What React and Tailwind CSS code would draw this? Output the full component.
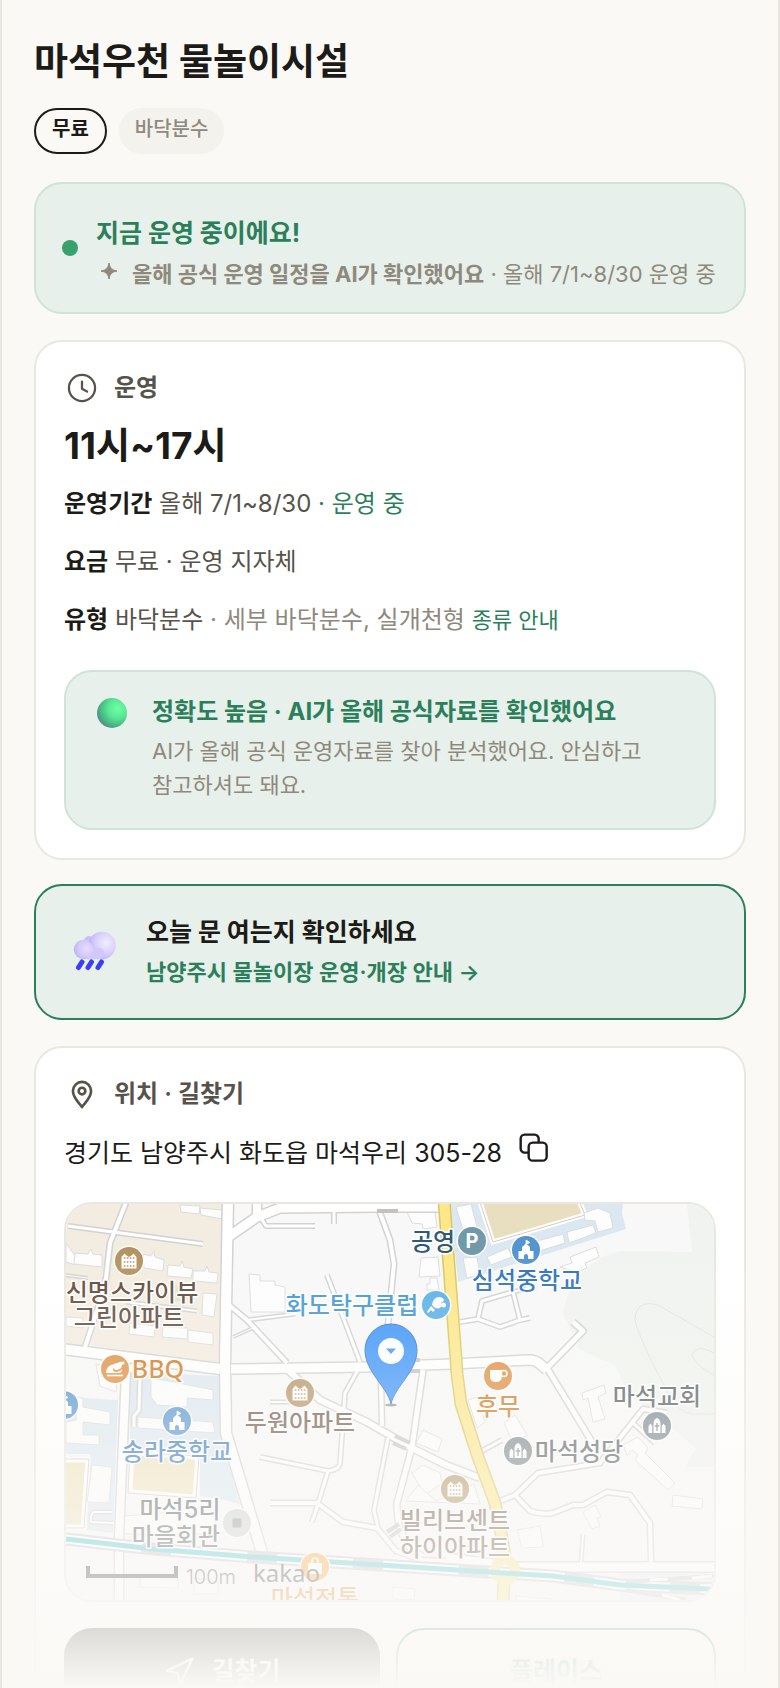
import React from 'react';
import { Navigation } from 'lucide-react';

const roads = [
    { d: 'M162 -5L159 160L160 229L197 352', w: 13 },
    { d: 'M162 33L191 13L214 4L311 3L374 3', w: 12 },
    { d: 'M191 -6V10', w: 11 },
    { d: 'M195 14L200 22H249', w: 6 },
    { d: 'M268 6V20', w: 6 },
    { d: 'M313 6L324 36L328 60L322 120L315 176L316 222', w: 7 },
    { d: 'M261 71L294 158', w: 6 },
    { d: 'M163 101L181 116L221 159', w: 7 },
    { d: 'M181 116L229 110', w: 5 },
    { d: 'M167 133L187 124', w: 4 },
    { d: 'M165 165L299 163L386 160L463 156Q470 156 474 160L481 166', w: 12 },
    { d: 'M-4 145L154 165', w: 13 },
    { d: 'M394 118L412 115L416 97L447 88L454 116L434 123L412 115', w: 6 },
    { d: 'M454 116L464 114', w: 6 },
    { d: 'M447 88L470 82', w: 5 },
    { d: 'M507 118L517 127L481 164L526 238', w: 8 },
    { d: 'M357 166L346 243L331 299Q330 325 344 344L356 352', w: 8 },
    { d: 'M222 166L254 196L301 218L344 243L380 261L414 274', w: 9 },
    { d: 'M292 166L279 189L274 260Q272 266 262 267L194 253', w: 6 },
    { d: 'M262 267L251 303L246 318', w: 6 },
    { d: 'M204 299L251 299L277 318L311 324L330 347L356 356L401 358', w: 7 },
    { d: 'M322 234L308 306L312 324', w: 6 },
    { d: 'M204 198H226', w: 5 },
    { d: 'M434 297L449 291L472 269L534 259L577 205L601 209', w: 7 },
    { d: 'M449 291L464 307Q476 311 487 309L507 301L517 301L541 288L564 291L584 319L585 360', w: 7 },
    { d: 'M517 331L515 360', w: 5 },
    { d: 'M380 354L452 363L660 363', w: 12 },
    { d: 'M414 248L436 236', w: 6 },
    { d: 'M567 219L589 239', w: 6 },
    { d: 'M60 168L53 333V396', w: 11 },
    { d: 'M74 174L73 206L68 212V223', w: 6 },
    { d: 'M46 308H28Q24 310 25 318L47 319', w: 5 },
    { d: 'M61 -4L44 39L39 83L19 143', w: 7 },
    { d: 'M2 22L137 40', w: 6 },
    { d: 'M-2 71L22 74', w: 4 },
    { d: 'M60 98L131 107', w: 5 },
];

const houses = [
    '114,1 134,2 133,10 115,8',
    '134,4 156,6 156,15 135,11',
    '0,39 10,53 9,61 0,58',
    '9,49 22,50 25,45 27,50 36,51 36,63 8,60',
    '77,50 85,52 88,47 89,53 98,56 97,67 78,64',
    '102,61 114,62 116,57 118,63 127,65 125,74 101,72',
    '127,67 139,67 141,62 143,68 152,69 151,79 127,77',
    '137,89 151,90 148,113 136,111',
    '0,113 17,114 17,124 0,122',
    '64,119 89,122 88,133 63,130',
    '97,123 122,124 121,135 96,133',
    '122,126 147,129 147,141 122,138',
    '183,70 194,71 194,77 209,77 209,81 219,83 219,108 185,108',
    '341,8 369,8 371,23 357,25 356,20 346,19',
    '355,54 372,53 374,72 353,73',
    '364,74 371,74 373,86 361,86 361,80 364,80',
    '390,3 405,0 411,23 397,26',
    '421,53 442,44 446,53 425,61',
    '464,39 497,30 499,39 467,49',
    '501,28 527,21 530,29 503,39',
    '518,9 532,4 544,9 547,24 532,28 529,17 519,16',
    '494,63 506,59 504,53 530,43 533,53 519,59 521,64 511,68',
    '397,54 411,53 414,71 401,74',
    '516,189 538,181 540,189 532,193 539,215 527,218 522,194 517,196',
    '357,226 376,235 372,248 350,239',
    '438,219 449,211 461,231 447,239',
    '402,196 411,193 419,218 411,224',
    '557,241 572,233 582,244 579,249 609,279 602,286 569,256 572,251 566,246 561,251',
    '607,291 637,295 636,305 606,302',
    '517,308 529,301 535,313 531,314 534,322 526,325',
    '451,326 474,322 477,343 456,344',
    '346,269 357,261 374,269 376,279 359,291',
    '340,297 352,281 370,297 408,280 414,300',
    '11,193 17,194 17,203 44,208 44,221 17,218 17,231 33,231 33,241 0,239 0,218 10,216',
    '26,261 46,263 43,299 21,298',
    '85,174 108,178 147,186 147,196 121,194 121,203 91,201 85,193',
    '72,213 147,218 149,229 72,224',
    '30,160 52,166 50,188 34,182',
    '58,312 110,308 150,312 150,330 58,330',
    '74,373 112,374 112,384 74,383',
    '327,383 349,385 348,396 327,395',
    '450,392 486,395 486,402 450,402',
    '128,374 152,378 152,390 128,390',
];

const labels = [
    { x: 66, y: 97, text: '신명스카이뷰', color: '#5f4a3c' },
    { x: 63, y: 122, text: '그린아파트', color: '#5f4a3c' },
    { x: 367, y: 46, text: '공영', color: '#2d5b75' },
    { x: 461, y: 85, text: '심석중학교', color: '#2e73bb' },
    { x: 286, y: 110, text: '화도탁구클럽', color: '#3f98d3' },
    { x: 432, y: 211, text: '후무', color: '#cf7518' },
    { x: 591, y: 201, text: '마석교회', color: '#50595d' },
    { x: 513, y: 256, text: '마석성당', color: '#50595d' },
    { x: 234, y: 227, text: '두원아파트', color: '#6b5546' },
    { x: 111, y: 256, text: '송라중학교', color: '#2e73bb' },
    { x: 114, y: 314, text: '마석5리', color: '#50595d' },
    { x: 110, y: 341, text: '마을회관', color: '#50595d' },
    { x: 389, y: 325, text: '빌리브센트', color: '#6b5546' },
    { x: 389, y: 352, text: '하이아파트', color: '#6b5546' },
    { x: 249, y: 403, text: '마석전통', color: '#ea7c1c' },
];

function Spot({ x, y, color, children }) {
    return (
        <g transform={`translate(${x} ${y})`}>
            <circle r="15.5" fill="#ffffff" fillOpacity="0.9" />
            <circle r="14" fill={color} />
            {children}
        </g>
    );
}

function Apartment({ x, y }) {
    return (
        <Spot x={x} y={y} color="#b49362">
            <path d="M-7.5 7.5V-4L-4.5 -7.5L-2.5 -5.5L0 -4L2.5 -5.5L4.5 -7.5L7.5 -4V7.5Z" fill="#fff" />
            {[-3, 1, 5].map((wy) => (
                <path key={wy} d={`M-5.2 ${wy}h10.6`} stroke="#b49362" strokeWidth="1.6" strokeDasharray="1.6 1.4" />
            ))}
        </Spot>
    );
}

function School({ x, y }) {
    return (
        <Spot x={x} y={y} color="#5494cf">
            <path d="M-7.5 9V1H-4V-3L0 -6.5L4 -3V1H7.5V9H2V6a2 2 0 0 0-4 0V9Z" fill="#fff" />
            <path d="M0 -5V-10L4 -7.5L0.8 -6" fill="#fff" stroke="#fff" strokeWidth="0.8" />
        </Spot>
    );
}

function Church({ x, y }) {
    return (
        <Spot x={x} y={y} color="#7a868c">
            <path d="M-3.5 7V-3Q-3 -7 0 -8Q3 -7 3.5 -3V7ZM-8.5 7V0L-6.5 -2.5L-4.7 0V7ZM8.5 7V0L6.5 -2.5L4.7 0V7Z" fill="#fff" />
            <path d="M0 -3V5M-2.2 0H2.2" stroke="#7a868c" strokeWidth="1.3" />
        </Spot>
    );
}

function MapView() {
    return (
        <svg viewBox="0 0 648 396" preserveAspectRatio="xMidYMid slice" className="block h-[396px] w-full" role="img" aria-label="마석우천 물놀이시설 지도">
            <rect width="648" height="396" fill="#f8f8f8" />

            {/* Ground areas */}
            <path d="M0 0H158L154 160L22 141H0Z" fill="#f3ece0" />
            <path d="M384 0H557L556 9L560 25L392 78Z" fill="#dce8f1" />
            <path d="M621 0H648V263L619 263L630 244L562 189L549 161L514 146L497 109Q502 80 522 63Q538 50 554 47L626 48Z" fill="#f0f3ef" />
            <path d="M64 168L154 172L156 236L174 300L158 296L134 292L134 252L64 246Z" fill="#dce8f1" />
            <path d="M0 193L52 196L47 329L21 326L24 250L0 250Z" fill="#dce8f1" />
            <path d="M106 81L121 83V96L106 98Z" fill="#d8e9d2" />
            <path d="M554 369H648V396H554Z" fill="#e6eef4" />

            {/* School fields */}
            <g stroke="#ffffff" strokeWidth="5">
                <path d="M412 -8L427 38L519 11L511 -8Z" fill="#e8dec0" />
                <path d="M66 249L132 253L129 293L64 288Z" fill="#efe3bd" />
                <path d="M-4 256L22 256L17 323H-4Z" fill="#efe3bd" />
            </g>
            <g fill="none" stroke="#dcc9bb">
                <path d="M412 -8L427 38L519 11L511 -8ZM64 248L133 252L130 294L62 289ZM-4 255L23 255L18 324H-4Z" />
            </g>

            <g fill="#fdfdfd" stroke="#dcdcdc">
                {houses.map((points) => (
                    <polygon key={points} points={points} />
                ))}
            </g>

            {/* Hill contours */}
            <path d="M648 133L592 101Q570 95 569 116Q572 132 599 183Q611 210 627 210H648M648 149Q630 139 626 151Q630 162 648 171" fill="none" stroke="#dfe3de" />

            {/* Roads: casing first, surface on top */}
            <g fill="none" stroke="#d2d2d2" strokeLinejoin="round">
                {roads.map((road) => (
                    <path key={road.d} d={road.d} strokeWidth={road.w} />
                ))}
            </g>
            <g fill="none" stroke="#ffffff" strokeLinejoin="round">
                {roads.map((road) => (
                    <path key={road.d} d={road.d} strokeWidth={road.w - 3} />
                ))}
            </g>
            <path d="M311 7L332 7M329 232L344 239M327 239L340 245M342 156H354M340 167H354M321 328L333 320M324 333L335 325" stroke="#c2c2c2" strokeWidth="4" />

            {/* Railway */}
            <path d="M0 335L87 345L187 353L314 361L437 369L487 372L554 381L648 385" fill="none" stroke="#c9c9c9" strokeWidth="13" />
            <path d="M0 335L87 345L187 353L314 361L437 369L487 372L554 381L648 385" fill="none" stroke="#ffffff" strokeWidth="9" strokeDasharray="76 30" />
            <path d="M560 378L648 372M560 386L620 396" fill="none" stroke="#c9c9c9" strokeWidth="4" />
            <path d="M584 376L602 375M626 374L646 372M596 391L614 396" fill="none" stroke="#ffffff" strokeWidth="3" />

            {/* Main road */}
            <g fill="none" strokeLinejoin="round">
                <path d="M378 -4L390 154L391 170L395 200L412 253L429 299L435 329L439 352M438 378L437 400" stroke="#d8c661" strokeWidth="13" />
                <circle cx="439" cy="366" r="10" stroke="#f7e690" strokeWidth="10" />
                <path d="M378 -4L390 154L391 170L395 200L412 253L429 299L435 329L439 352M438 378L437 400" stroke="#fde788" strokeWidth="10" />
            </g>
            <path d="M0 335L87 345L187 353L314 361L437 369L487 372L554 381L644 385" fill="none" stroke="#52c8cd" strokeWidth="5" />

            {/* Places */}
            <Apartment x={63} y={57} />
            <Apartment x={234} y={189} />
            <Apartment x={389} y={285} />
            <School x={460} y={46} />
            <School x={111} y={217} />
            <School x={-2} y={201} />
            <Church x={591} y={222} />
            <Church x={452} y={247} />
            <Spot x={49} y={165} color="#de8d3e">
                <path d="M-9 3Q-8 -4 -1 -5Q1 -6 3 -6Q5 -8 7 -7Q9 -9 9.500 -6Q9.500 -4 7 -4.500Q7 0 2 1Q-2 1 -1 -2Q-4 3 2 3Q6 2 7 0Q7 4 4 4H-9Z" fill="#fff" />
                <path d="M-8 6.5H8" stroke="#fff" strokeWidth="1.600" />
            </Spot>
            <Spot x={432} y={172} color="#de8d3e">
                <path d="M-8 -6H4V0Q4 6 -2 6Q-8 6 -8 0Z" fill="#fff" />
                <circle cx="6" cy="-2.5" r="3" fill="none" stroke="#fff" strokeWidth="1.6" />
            </Spot>
            <Spot x={370} y={101} color="#5ab1e6">
                <path d="M-4 0Q-3 -7 2 -8Q8 -8 8 -4Q4 -3 5 2Q1 6 -4 0ZM-5 1L-1 5L-3 7L-5 5L-8 8L-9 7Z" fill="#fff" />
                <circle cx="7.500" cy="0" r="2.500" fill="#fff" />
            </Spot>
            <Spot x={406} y={37} color="#7299aa">
                <text y="7" textAnchor="middle" fill="#ffffff" className="text-[20px] font-bold">P</text>
            </Spot>
            <Spot x={171} y={319} color="#cfd1d3">
                <rect x="-4.5" y="-4.5" width="9" height="9" fill="#8e9699" />
            </Spot>
            <Spot x={249} y={363} color="#fba22c">
                <path d="M-7 -4H7V7H-7Z" fill="#fff" />
                <path d="M-3 -4V-6a3 3 0 0 1 6 0V-4" fill="none" stroke="#fff" strokeWidth="1.6" />
            </Spot>

            <g textAnchor="middle" stroke="#ffffff" strokeWidth="3" strokeLinejoin="round" paintOrder="stroke" className="text-[24px] font-medium">
                {labels.map((label) => (
                    <text key={label.text} x={label.x} y={label.y} fill={label.color}>{label.text}</text>
                ))}
                <text x="92" y="174" fill="#cf7518" className="font-['Noto_Sans'] text-[25px]">BBQ</text>
            </g>

            {/* Current facility marker */}
            <ellipse cx="325" cy="201" rx="6" ry="1.5" fill="#000000" fillOpacity="0.4" />
            <path d="M325 200C321 182 299 168 299 146A26 26 0 0 1 351 146C351 168 329 182 325 200Z" fill="#3c94f9" stroke="#2f73cf" />
            <circle cx="325" cy="147" r="13" fill="#ffffff" />
            <path d="M320 144.500H330L325 150Z" fill="#3c94f9" />

            {/* Scale and logo */}
            <path d="M22 362V372H110V362" fill="none" stroke="#333333" strokeWidth="4" />
            <text x="120" y="380" fill="#4a4a4a" className="text-[20px] font-light">100m</text>
            <text x="187" y="378" fill="#3a3a3a" className="font-['Noto_Sans'] text-[24px]">kakao</text>
        </svg>
    );
}

function RainCloud() {
    return (
        <svg viewBox="0 0 54 48" className="h-12 w-[54px] shrink-0" aria-hidden="true">
            <defs>
                <radialGradient id="cloudBig" cx="0.65" cy="0.4" r="0.65">
                    <stop offset="0" stopColor="#f3ecfd" />
                    <stop offset="0.6" stopColor="#d9d0fb" />
                    <stop offset="1" stopColor="#b9b0f8" />
                </radialGradient>
                <radialGradient id="cloudSmall" cx="0.65" cy="0.45" r="0.7">
                    <stop offset="0" stopColor="#e6dcfc" />
                    <stop offset="0.6" stopColor="#d3c9fb" />
                    <stop offset="1" stopColor="#b7aef6" />
                </radialGradient>
            </defs>
            <circle cx="21" cy="13" r="5" fill="#c3c2fb" />
            <circle cx="34" cy="17.500" r="13.700" fill="url(#cloudBig)" />
            <rect x="12" y="20" width="24" height="11.200" rx="5" fill="#d0c7fa" />
            <circle cx="15.500" cy="21.500" r="9.700" fill="url(#cloudSmall)" />
            <path d="M14 34L10.500 39.500M23.500 34L20 39.500M33.500 34L30 39.500" stroke="#3c3dfa" strokeWidth="5" strokeLinecap="round" />
        </svg>
    );
}

function GreenBall() {
    return (
        <svg viewBox="0 0 36 32" className="h-8 w-9 shrink-0" aria-hidden="true">
            <defs>
                <radialGradient id="ball" cx="0.68" cy="0.35" r="0.7">
                    <stop offset="0" stopColor="#6cffa4" />
                    <stop offset="0.45" stopColor="#5ae795" />
                    <stop offset="0.85" stopColor="#44b480" />
                    <stop offset="1" stopColor="#56908f" />
                </radialGradient>
            </defs>
            <circle cx="18" cy="17" r="15" fill="url(#ball)" />
        </svg>
    );
}

function CardTitle({ icon, children }) {
    return (
        <h2 className="flex h-9 items-center gap-[14px] text-[24px] leading-[36px] font-semibold text-[#57534b]">
            <span className="flex w-9 justify-center">{icon}</span>
            {children}
        </h2>
    );
}

export default function App() {
    const details = [
        { name: '운영기간', value: <>올해 7/1~8/30 <span className="text-[#2c7f5b]">· 운영 중</span></> },
        { name: '요금', value: '무료 · 운영 지자체' },
        {
            name: '유형',
            value: (
                <>
                    바닥분수 <span className="text-[#8f897d]">· 세부 바닥분수, 실개천형</span>{' '}
                    <a href="#types" className="text-[22px] text-[#2c7f5b]">종류 안내</a>
                </>
            ),
        },
    ];

    return (
        <div className="relative h-screen overflow-hidden border-x-2 border-[#e9e7e0] bg-[#faf9f6] px-8 pt-10 font-[Inter,'Noto_Sans_CJK_KR',sans-serif] text-[#1c1b18] break-keep">
            <h1 className="text-[37px] leading-[44px] font-bold">마석우천 물놀이시설</h1>

            <div className="mt-6 flex gap-3 text-[20px] leading-[38px]">
                <span className="h-[46px] rounded-full border-2 border-[#1c1b18] px-4 font-bold">무료</span>
                <span className="h-[46px] rounded-full border-y-2 border-[#f3f2ed] bg-[#f3f2ed] px-4 font-medium text-[#8f897d]">바닥분수</span>
            </div>

            {/* Status banner */}
            <section className="mt-7 flex items-start gap-[18px] rounded-[28px] border-2 border-[#cfe4d8] bg-[#e7f0ea] pt-8 pr-6 pb-[22px] pl-[26px]">
                <span className="mt-6 h-4 w-4 shrink-0 rounded-full bg-[#38a26c]"></span>
                <div>
                    <p className="text-[25px] leading-[34px] font-bold text-[#2c7f5b]">지금 운영 중이에요!</p>
                    <p className="mt-2 flex gap-[10px] text-[22px] leading-[32px] text-[#8f897d]">
                        <svg viewBox="0 0 26 26" className="h-[26px] w-[26px] shrink-0" fill="currentColor" aria-hidden="true">
                            <path d="M13 5Q13.800 12.200 21 13Q13.800 13.800 13 21Q12.200 13.800 5 13Q12.200 12.200 13 5Z" stroke="currentColor" />
                        </svg>
                        <span><strong className="font-bold">올해 공식 운영 일정을 AI가 확인했어요</strong> · 올해 7/1~8/30 운영 중</span>
                    </p>
                </div>
            </section>

            {/* Opening hours */}
            <section className="mt-[26px] rounded-[28px] border-2 border-[#e9e7e0] bg-white p-7">
                <CardTitle
                    icon={
                        <svg viewBox="0 0 24 24" className="h-8 w-8" fill="none" stroke="currentColor" strokeWidth="1.7" strokeLinecap="round" strokeLinejoin="round" aria-hidden="true">
                            <circle cx="12" cy="12" r="9.800" />
                            <path d="M12 7.200V12.600L15.800 14.700" />
                        </svg>
                    }
                >
                    운영
                </CardTitle>
                <p className="mt-4 text-[37px] leading-[48px] font-bold">11시~17시</p>
                <dl className="mt-4 flex flex-col gap-[22px] text-[24px] leading-[36px]">
                    {details.map((item) => (
                        <div key={item.name}>
                            <dt className="inline font-bold">{item.name}</dt>{' '}
                            <dd className="inline text-[#57534b]">{item.value}</dd>
                        </div>
                    ))}
                </dl>
                <div className="mt-8 flex gap-[22px] rounded-[28px] border-2 border-[#cfe4d8] bg-[#e7f0ea] pt-6 pr-7 pb-[26px] pl-7">
                    <GreenBall />
                    <div>
                        <p className="text-[24px] leading-[32px] font-bold text-[#2c7f5b]">정확도 높음 · AI가 올해 공식자료를 확인했어요</p>
                        <p className="mt-[6px] text-[22px] leading-[34px] text-[#8f897d]">AI가 올해 공식 운영자료를 찾아 분석했어요. 안심하고 참고하셔도 돼요.</p>
                    </div>
                </div>
            </section>

            {/* Official notice link */}
            <a href="#notice" className="mt-6 flex items-center gap-6 rounded-[28px] border-2 border-[#2c7f5b] bg-[#e7f0ea] px-8 py-[29px]">
                <RainCloud />
                <span className="flex flex-col gap-[6px]">
                    <span className="text-[25px] leading-[34px] font-bold">오늘 문 여는지 확인하세요</span>
                    <span className="text-[22px] leading-[34px] font-semibold text-[#2c7f5b]">남양주시 물놀이장 운영·개장 안내 →</span>
                </span>
            </a>

            {/* Location */}
            <section className="mt-[26px] rounded-[28px] border-2 border-[#e9e7e0] bg-white p-7">
                <CardTitle
                    icon={
                        <svg viewBox="0 0 24 24" className="h-8 w-8" fill="none" stroke="currentColor" strokeWidth="2" strokeLinejoin="round" aria-hidden="true">
                            <path d="M12 21.800C10.500 19.300 5.200 15.200 5.200 9.800A6.800 6.900 0 0 1 18.800 9.800C18.800 15.200 13.500 19.300 12 21.800Z" />
                            <circle cx="12" cy="9.800" r="2.500" />
                        </svg>
                    }
                >
                    위치 · 길찾기
                </CardTitle>
                <div className="mt-5 flex items-start gap-4">
                    <p className="text-[25px] leading-[42px]">경기도 남양주시 화도읍 마석우리 305-28</p>
                    <button type="button" aria-label="주소 복사">
                        <svg viewBox="0 0 24 24" className="h-8 w-8" fill="none" stroke="currentColor" strokeWidth="1.8" strokeLinecap="round" strokeLinejoin="round" aria-hidden="true">
                            <rect x="8" y="8" width="13.500" height="13.500" rx="3" />
                            <path d="M15.500 7.500V5a3 3 0 0 0-3-3H5a3 3 0 0 0-3 3v7.500a3 3 0 0 0 3 3h2.500" />
                        </svg>
                    </button>
                </div>
                <div className="mt-7 overflow-hidden rounded-[28px] border-2 border-[#e9e7e0]">
                    <MapView />
                </div>
                <div className="mt-[26px] grid grid-cols-[79fr_80fr] gap-4 text-[25px] font-bold">
                    <a href="#route" className="flex h-[88px] items-center justify-center gap-4 rounded-[28px] bg-[#1c1b18] text-white">
                        <Navigation className="h-8 w-8" strokeWidth={1.8} />
                        길찾기
                    </a>
                    <a href="#place" className="flex h-[88px] items-center justify-center rounded-[28px] border-2 border-[#2c7f5b] text-[#2c7f5b]">플레이스</a>
                </div>
            </section>

            <div className="pointer-events-none absolute -inset-x-[2px] bottom-0 h-[440px] bg-linear-to-b from-[#faf9f6]/0 to-[#faf9f6]"></div>
        </div>
    );
}
